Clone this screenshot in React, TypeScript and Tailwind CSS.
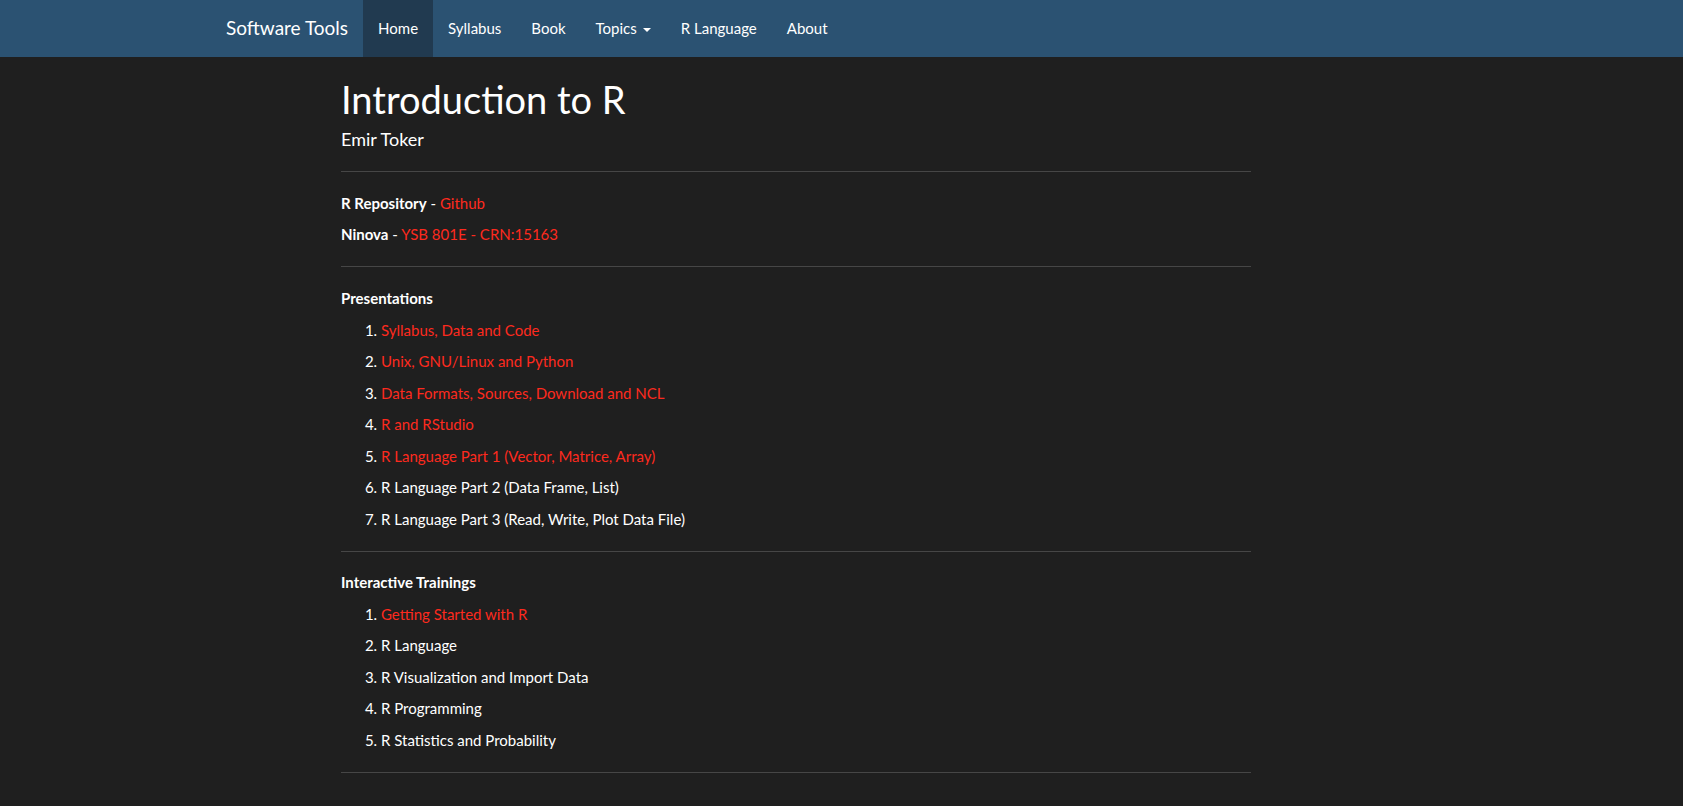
import React from "react";

const presentations = [
  { label: "Syllabus, Data and Code", link: true },
  { label: "Unix, GNU/Linux and Python", link: true },
  { label: "Data Formats, Sources, Download and NCL", link: true },
  { label: "R and RStudio", link: true },
  { label: "R Language Part 1 (Vector, Matrice, Array)", link: true },
  { label: "R Language Part 2 (Data Frame, List)", link: false },
  { label: "R Language Part 3 (Read, Write, Plot Data File)", link: false },
];

const trainings = [
  { label: "Getting Started with R", link: true },
  { label: "R Language", link: false },
  { label: "R Visualization and Import Data", link: false },
  { label: "R Programming", link: false },
  { label: "R Statistics and Probability", link: false },
];

const navLinks = ["Home", "Syllabus", "Book", "Topics", "R Language", "About"];

function Navbar() {
  return (
    <nav className="bg-[#2b5272] h-[57px] flex items-stretch pl-[211px]">
      <a href="#" className="px-[15px] flex items-center text-[19px] text-white">
        Software Tools
      </a>
      <ul className="flex items-stretch">
        {navLinks.map((name) => (
          <li key={name} className="flex">
            <a
              href="#"
              className={
                "px-[15px] flex items-center text-[15px] text-white " +
                (name === "Home" ? "bg-[#213a50]" : "")
              }
            >
              {name}
              {name === "Topics" && (
                <span className="inline-block w-0 h-0 ml-[6px] mt-[2px] border-t-[4px] border-t-white border-x-[4px] border-x-transparent" />
              )}
            </a>
          </li>
        ))}
      </ul>
    </nav>
  );
}

function ItemList({ items }: { items: { label: string; link: boolean }[] }) {
  return (
    <ol className="list-decimal pl-[40px] mt-[10.5px] flex flex-col gap-[10px]">
      {items.map((item) => (
        <li key={item.label} className="leading-[21.43px]">
          {item.link ? (
            <a href="#" className="text-[#fd2a1e]">
              {item.label}
            </a>
          ) : (
            item.label
          )}
        </li>
      ))}
    </ol>
  );
}

export default function App() {
  return (
    <div
      className="min-h-screen bg-[#1f1f1f] text-white text-[15px]"
      style={{ fontFamily: "Lato, 'Open Sans', sans-serif" }}
    >
      <Navbar />
      <main className="ml-[341px] w-[910px] pb-[21px]">
        {/* Header */}
        <h1 className="mt-[21px] text-[38px] leading-[43px]">Introduction to R</h1>
        <h4 className="mt-[8px] text-[18px] leading-[20px]">Emir Toker</h4>
        <hr className="mt-[22px] border-t border-[#464646]" />

        {/* Links */}
        <div className="mt-[21px] flex flex-col gap-[10px] leading-[21px]">
          <p>
            <strong>R Repository</strong> -{" "}
            <a href="#" className="text-[#fd2a1e]">
              Github
            </a>
          </p>
          <p>
            <strong>Ninova</strong> -{" "}
            <a href="#" className="text-[#fd2a1e]">
              YSB 801E - CRN:15163
            </a>
          </p>
        </div>
        <hr className="mt-[21px] border-t border-[#464646]" />

        {/* Presentations */}
        <div className="mt-[21px]">
          <p className="font-bold leading-[21.43px]">Presentations</p>
          <ItemList items={presentations} />
        </div>
        <hr className="mt-[21px] border-t border-[#464646]" />

        {/* Interactive Trainings */}
        <div className="mt-[20px]">
          <p className="font-bold leading-[21.43px]">Interactive Trainings</p>
          <ItemList items={trainings} />
        </div>
        <hr className="mt-[21px] border-t border-[#464646]" />
      </main>
    </div>
  );
}
